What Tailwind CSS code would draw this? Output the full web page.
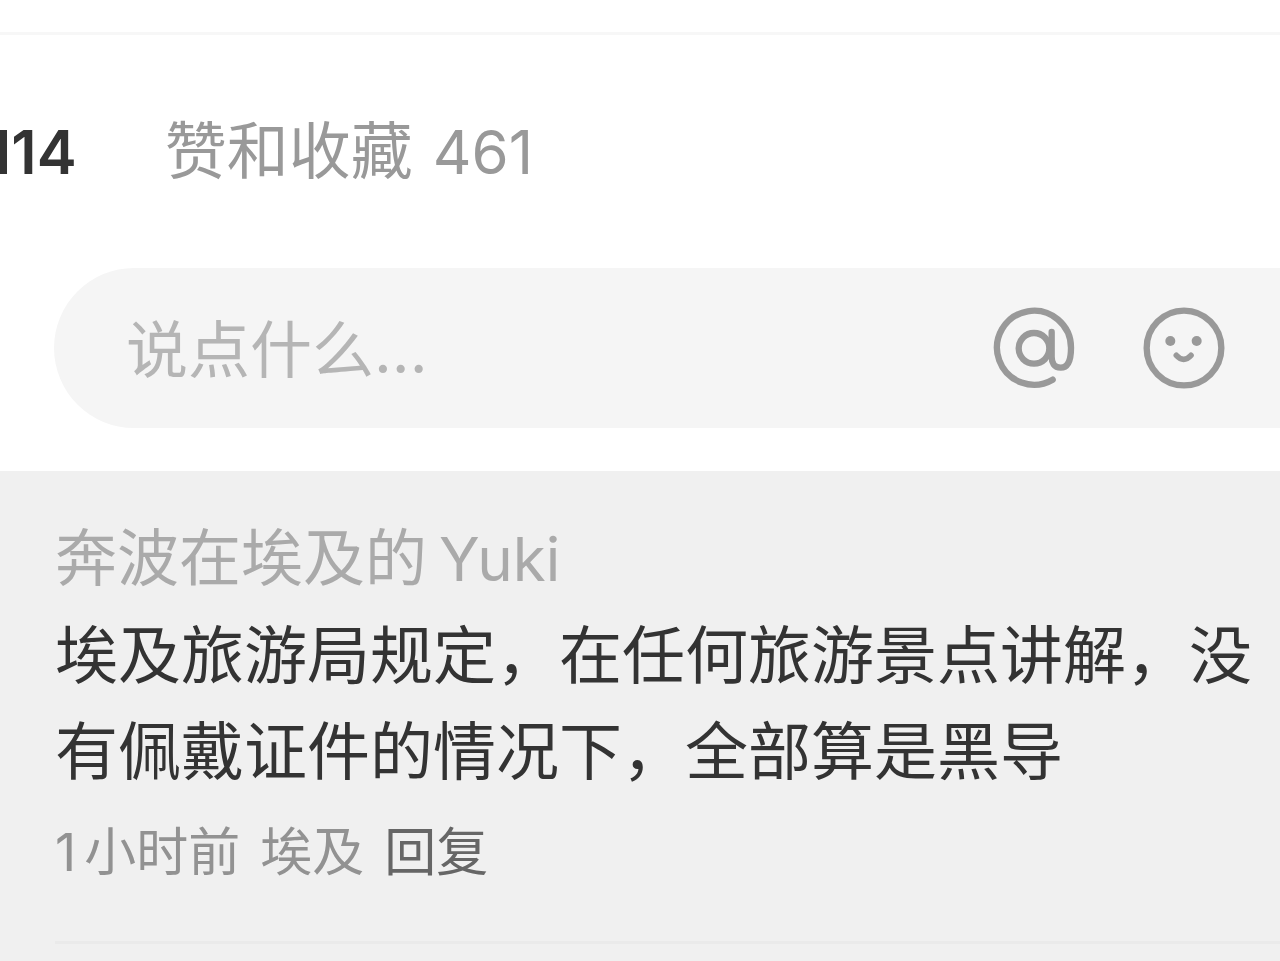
<!DOCTYPE html>
<html lang="zh-CN">
<head>
<meta charset="utf-8">
<meta name="viewport" content="width=device-width, initial-scale=1">
<title>评论</title>
<script src="https://cdn.jsdelivr.net/npm/@tailwindcss/browser@4"></script>
</head>
<body class="flex min-h-screen flex-col overflow-x-hidden bg-white font-['Inter','Noto_Sans_CJK_SC',sans-serif] text-[60px] text-[#333333]">
  <header class="h-[35px] shrink-0 border-b-3 border-[#f7f7f7]"></header>

  <nav class="flex h-[233px] items-center gap-[88px] overflow-hidden">
    <button type="button" class="-ml-[14px] font-semibold leading-[88px]">114</button>
    <button type="button" class="flex gap-5 whitespace-nowrap leading-[88px] text-[#999999]"><span class="text-[62px]">赞和收藏</span><span>461</span></button>
  </nav>

  <form class="ml-[54px] flex h-40 shrink-0 items-center gap-[66px] rounded-l-[80px] bg-[#f5f5f5] pr-[54px] pl-[72px]">
    <input type="text" aria-label="说点什么" placeholder="说点什么..." class="h-24 min-w-0 flex-1 bg-transparent pt-1 text-[62px] outline-none placeholder:text-[#b5b5b5]">
    <button type="button" aria-label="提及用户" class="size-[84px] shrink-0">
      <svg viewBox="0 0 252 252" class="size-full" fill="none" stroke="#999999" stroke-width="19" stroke-linecap="round" stroke-linejoin="round">
        <path d="M182 221A111 111 0 1 1 237 126C237 154 233 185 206 185C186 185 179 170 179 152V78"/>
        <circle cx="126" cy="127" r="46"/>
      </svg>
    </button>
    <button type="button" aria-label="表情" class="size-[84px] shrink-0">
      <svg viewBox="0 0 252 252" class="size-full" fill="none" stroke="#999999" stroke-width="19" stroke-linecap="round">
        <circle cx="126" cy="126" r="112"/>
        <path d="M103 148Q125 172 147 148" stroke-width="17"/>
        <g fill="#999999" stroke="none"><circle cx="85" cy="105" r="15"/><circle cx="164" cy="105" r="15"/></g>
      </svg>
    </button>
  </form>

  <main class="mt-[43px] flex-1 bg-[#f0f0f0] pl-[55px]">
    <article class="border-b-3 border-[#eaeaea] pt-[44px] pb-[48px]">
      <h2 class="leading-[88px] text-[#aaaaaa]"><a href="#" class="flex gap-3"><span class="text-[62px]">奔波在埃及的</span><span>Yuki</span></a></h2>
      <p class="mt-1 text-[63px] leading-[96px]">埃及旅游局规定，在任何旅游景点讲解，没有佩戴证件的情况下，全部算是黑导</p>
      <div class="mt-[14px] flex items-center gap-5 text-[52px] leading-[80px] text-[#929292]">
        <time class="flex gap-2"><span>1</span><span>小时前</span></time>
        <span>埃及</span>
        <button type="button" class="text-[#666666]">回复</button>
      </div>
    </article>
  </main>
</body>
</html>
